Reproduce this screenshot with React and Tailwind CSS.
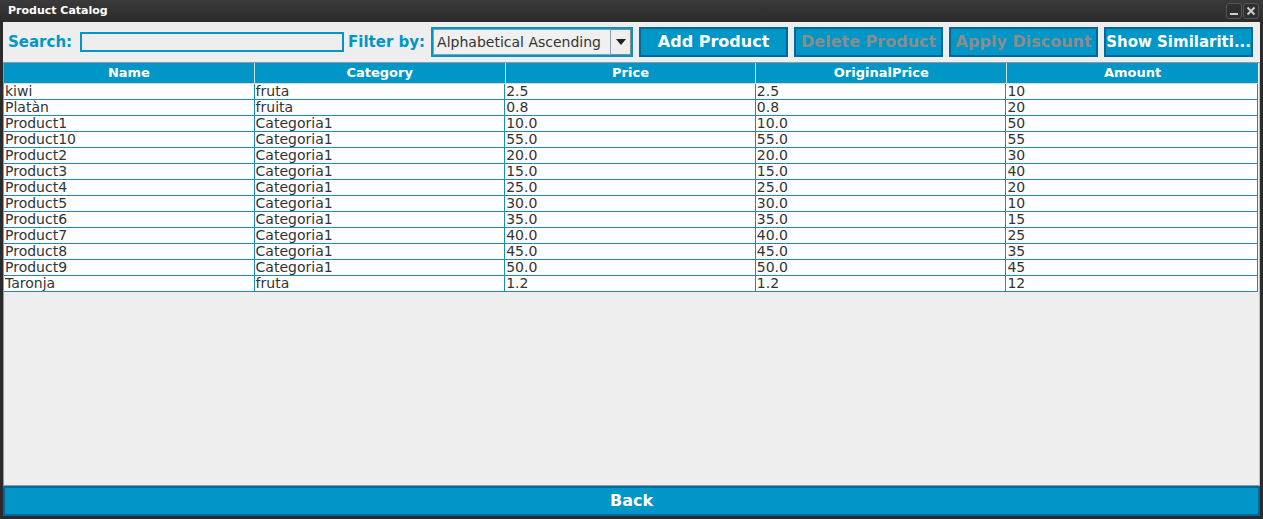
import React from 'react';

const rows = [
  ['kiwi', 'fruta', '2.5', '2.5', '10'],
  ['Platàn', 'fruita', '0.8', '0.8', '20'],
  ['Product1', 'Categoria1', '10.0', '10.0', '50'],
  ['Product10', 'Categoria1', '55.0', '55.0', '55'],
  ['Product2', 'Categoria1', '20.0', '20.0', '30'],
  ['Product3', 'Categoria1', '15.0', '15.0', '40'],
  ['Product4', 'Categoria1', '25.0', '25.0', '20'],
  ['Product5', 'Categoria1', '30.0', '30.0', '10'],
  ['Product6', 'Categoria1', '35.0', '35.0', '15'],
  ['Product7', 'Categoria1', '40.0', '40.0', '25'],
  ['Product8', 'Categoria1', '45.0', '45.0', '35'],
  ['Product9', 'Categoria1', '50.0', '50.0', '45'],
  ['Taronja', 'fruta', '1.2', '1.2', '12'],
];

const columns = ['Name', 'Category', 'Price', 'OriginalPrice', 'Amount'];

function ActionButton({ label, disabled = false, small = false }) {
  return (
    <button
      className={`w-[149px] h-[30px] px-0 bg-[#0096c8] border-2 border-[#00689a] font-bold leading-none whitespace-nowrap ${
        small ? 'text-[15px]' : 'text-[16px]'
      } ${disabled ? 'text-[#8c8c8c]' : 'text-white'}`}
    >
      {label}
    </button>
  );
}

export default function App() {
  return (
    <div
      className="w-[1263px] h-[519px] bg-[#2b2b2b] flex flex-col overflow-hidden"
      style={{ fontFamily: '"DejaVu Sans", Verdana, sans-serif' }}
    >
      {/* Title bar */}
      <div className="h-[22px] flex items-center justify-between pl-[8px] pr-[4px] bg-gradient-to-b from-[#3a3a3a] to-[#2b2b2b]">
        <span className="text-white text-[11px] font-bold">Product Catalog</span>
        <div className="flex gap-[1px]">
          <div className="w-[16px] h-[16px] rounded-[3px] border border-[#555] bg-[#2f2f2f] flex items-end justify-center pb-[3px]">
            <div className="w-[8px] h-[2px] bg-[#cfcfcf]" />
          </div>
          <div className="w-[16px] h-[16px] rounded-[3px] border border-[#555] bg-[#2f2f2f] flex items-center justify-center">
            <svg width="10" height="10" viewBox="0 0 10 10">
              <path d="M1.5 1.5 L8.5 8.5 M8.5 1.5 L1.5 8.5" stroke="#cfcfcf" strokeWidth="2" />
            </svg>
          </div>
        </div>
      </div>

      {/* Content */}
      <div className="flex-1 mx-[3px] mb-[3px] bg-[#eeeeee] flex flex-col">
        {/* Toolbar */}
        <div className="h-[40px] flex items-center pl-[5px]">
          <span className="text-[#0096c8] text-[15px] font-bold">Search:</span>
          <input className="ml-[8px] w-[264px] h-[20px] border-2 border-[#0096c8] bg-[#eeeeee] outline-none" />
          <span className="ml-[4px] text-[#0096c8] text-[15px] font-bold">Filter by:</span>
          <div className="ml-[6px] w-[202px] h-[30px] border-2 border-[#0096c8] flex">
            <div className="flex-1 border border-[#8aa0b4] bg-[#f0f0f0] flex items-center pl-[3px] text-[14px] text-[#333333]">
              Alphabetical Ascending
            </div>
            <div className="w-[20px] border border-[#8a8a8a] border-l-0 bg-[#eeeeee] flex items-center justify-center">
              <svg width="10" height="6" viewBox="0 0 10 6">
                <path d="M0 0 L10 0 L5 6 Z" fill="#222" />
              </svg>
            </div>
          </div>
          <div className="ml-[6px] flex gap-[6px]">
            <ActionButton label="Add Product" />
            <ActionButton label="Delete Product" disabled />
            <ActionButton label="Apply Discount" disabled />
            <ActionButton label="Show Similariti..." small />
          </div>
        </div>

        {/* Table */}
        <div className="flex-1 border border-[#8a9aa8] border-r-[#b8c4cc] bg-[#eeeeee] flex flex-col pr-[1px]">
          <div className="grid grid-cols-5 h-[21px] bg-[#0096c8]">
            {columns.map((c, i) => (
              <div
                key={c}
                className={`flex items-center justify-center text-white text-[13px] font-bold border-b border-[#d0dde6] ${
                  i < 4 ? 'border-r border-r-[#d0dde6]' : ''
                }`}
              >
                {c}
              </div>
            ))}
          </div>
          <div className="bg-white border-r border-[#0096c8]">
            {rows.map((r, ri) => (
              <div key={ri} className="grid grid-cols-5 h-[16px] border-b border-[#1a8cc0]">
                {r.map((v, ci) => (
                  <div
                    key={ci}
                    className={`pl-[1px] text-[14px] leading-[15px] text-[#333333] whitespace-nowrap overflow-hidden ${
                      ci < 4 ? 'border-r border-[#1a8cc0]' : ''
                    }`}
                  >
                    {v}
                  </div>
                ))}
              </div>
            ))}
          </div>
        </div>

        {/* Back button */}
        <button className="h-[30px] bg-[#0096c8] border-2 border-[#00689a] text-white text-[16px] font-bold">
          Back
        </button>
      </div>
    </div>
  );
}
